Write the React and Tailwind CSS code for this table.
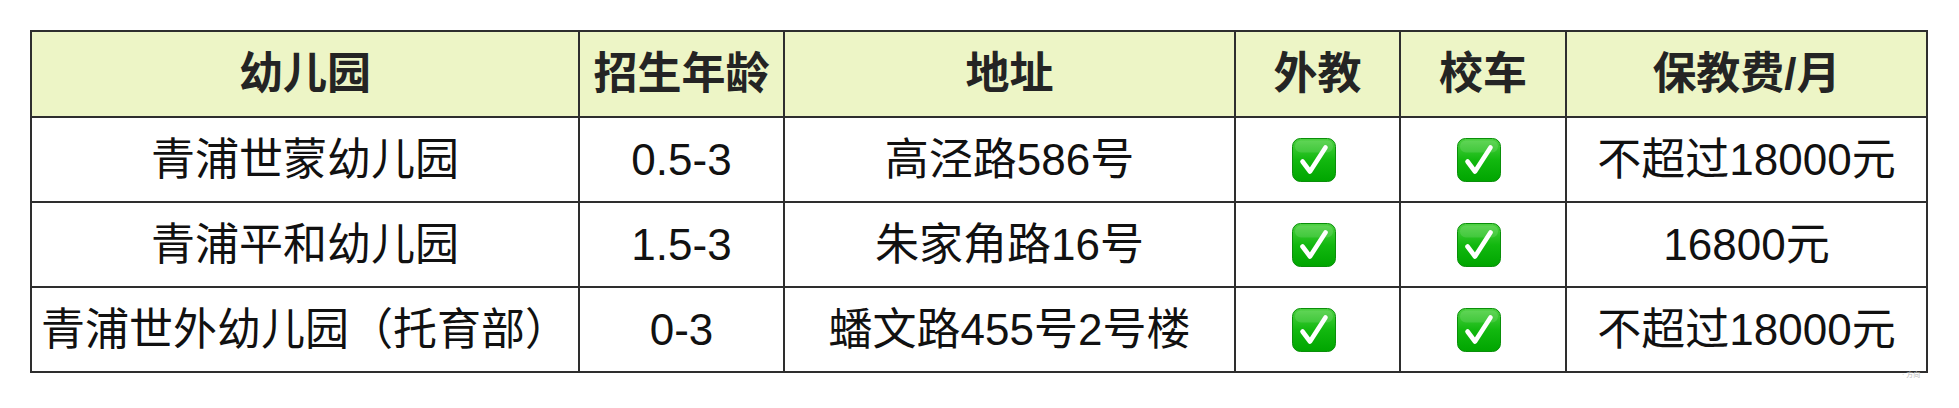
import React from "react";

const font = { fontFamily: '"Liberation Sans", "Noto Sans CJK SC", sans-serif' };

function Check() {
  return (
    <svg width="44" height="44" viewBox="0 0 44 44" className="inline-block align-middle">
      <defs>
        <linearGradient id="g" x1="0" y1="0" x2="0" y2="1">
          <stop offset="0" stopColor="#4fd143" />
          <stop offset="0.5" stopColor="#12b80f" />
          <stop offset="1" stopColor="#00a500" />
        </linearGradient>
      </defs>
      <rect x="0.5" y="0.5" width="43" height="43" rx="8" fill="url(#g)" stroke="#0a8f0a" strokeWidth="1" />
      <rect x="3" y="2.5" width="38" height="12" rx="6" fill="#ffffff" opacity="0.12" />
      <path d="M10.5 23.5 L18 33.5 L33.5 9.5" fill="none" stroke="#ffffff" strokeWidth="4.6" strokeLinecap="round" strokeLinejoin="round" />
    </svg>
  );
}

const rows = [
  ["青浦世蒙幼儿园", "0.5-3", "高泾路586号", "不超过18000元"],
  ["青浦平和幼儿园", "1.5-3", "朱家角路16号", "16800元"],
  ["青浦世外幼儿园（托育部）", "0-3", "蟠文路455号2号楼", "不超过18000元"],
];

const headers = ["幼儿园", "招生年龄", "地址", "外教", "校车", "保教费/月"];

export default function App() {
  return (
    <div className="w-[1959px] h-[408px] bg-white relative" style={font}>
      <div className="pt-[30px] pl-[30px]">
        <table className="table-fixed border-collapse border-2 border-[#2e2e2e] w-[1896px]">
          <colgroup>
            <col className="w-[548px]" />
            <col className="w-[205px]" />
            <col className="w-[451px]" />
            <col className="w-[165px]" />
            <col className="w-[166px]" />
            <col className="w-[361px]" />
          </colgroup>
          <thead>
            <tr className="h-[86px] bg-[#edf5c6]">
              {headers.map((h) => (
                <th key={h} className="border-2 border-[#2e2e2e] text-center align-middle text-[44px] font-bold text-[#242424] leading-none p-0">
                  {h}
                </th>
              ))}
            </tr>
          </thead>
          <tbody>
            {rows.map((r, i) => (
              <tr key={i} className="h-[85px]">
                <td className="border-2 border-[#2e2e2e] text-center align-middle text-[44px] text-[#111111] leading-none p-0 whitespace-nowrap">{r[0]}</td>
                <td className="border-2 border-[#2e2e2e] text-center align-middle text-[44px] text-[#111111] leading-none p-0">{r[1]}</td>
                <td className="border-2 border-[#2e2e2e] text-center align-middle text-[44px] text-[#111111] leading-none p-0">{r[2]}</td>
                <td className="border-2 border-[#2e2e2e] text-center align-middle p-0"><div className="flex justify-center pr-[8px]"><Check /></div></td>
                <td className="border-2 border-[#2e2e2e] text-center align-middle p-0"><div className="flex justify-center pr-[8px]"><Check /></div></td>
                <td className="border-2 border-[#2e2e2e] text-center align-middle text-[44px] text-[#111111] leading-none p-0">{r[3]}</td>
              </tr>
            ))}
          </tbody>
        </table>
      </div>
      <div className="absolute left-[1902px] top-[371px] text-[7px] text-[#bbbbbb] leading-none">· 方向</div>
    </div>
  );
}
